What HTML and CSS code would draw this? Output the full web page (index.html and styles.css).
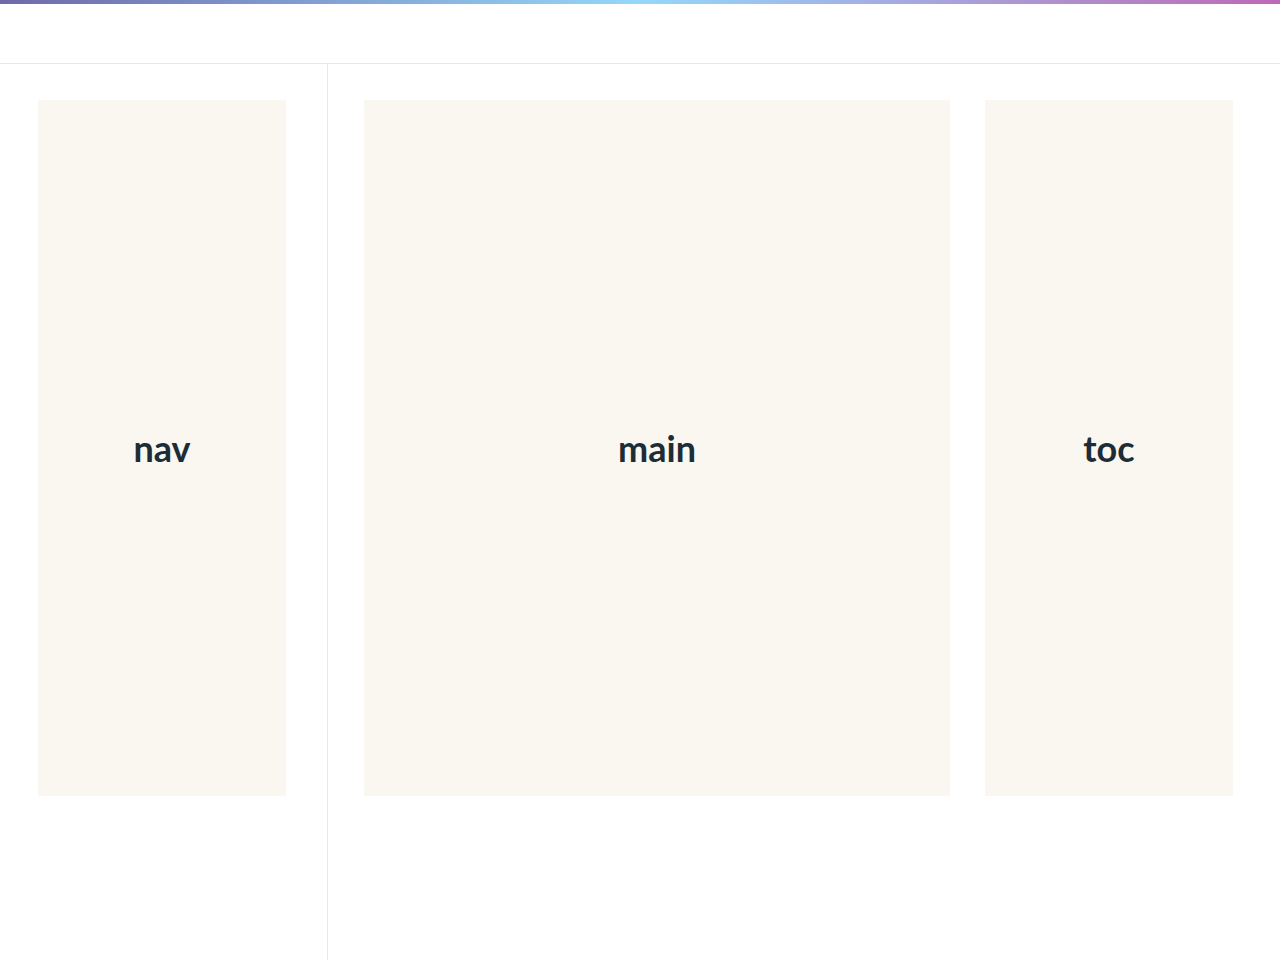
FILE: index.html
```html
<!DOCTYPE html>
<html lang="en">
<head>
<meta charset="utf-8">
<title>Layout</title>
<link rel="stylesheet" href="styles.css">
</head>
<body>
<div class="topbar"></div>
<header class="header"></header>
<div class="page">
  <aside class="sidebar">
    <div class="block block-nav">nav</div>
  </aside>
  <div class="content">
    <main class="block block-main">main</main>
    <div class="block block-toc">toc</div>
  </div>
</div>
</body>
</html>
```
FILE: styles.css
```css
html, body {
  margin: 0;
  padding: 0;
  background: #ffffff;
  font-family: Lato, "Open Sans", sans-serif;
}
.topbar {
  height: 4px;
  background: linear-gradient(90deg, #6f69ab 0%, #94d8f8 50%, #bd69b9 100%);
}
.header {
  height: 59px;
  border-bottom: 1px solid #e8e8e8;
}
.page {
  display: flex;
  height: 896px;
}
.sidebar {
  flex: none;
  width: 328px;
  box-sizing: border-box;
  border-right: 1px solid #e8e8e8;
  padding: 36px 0 0 38px;
}
.content {
  display: flex;
  gap: 35px;
  padding: 36px 0 0 36px;
}
.block {
  height: 696px;
  background: #faf6f0;
  display: flex;
  align-items: center;
  justify-content: center;
  font-size: 36px;
  font-weight: 700;
  color: #1c2d38;
}
.block-nav { width: 248px; }
.block-main { width: 586px; }
.block-toc { width: 248px; }
```
